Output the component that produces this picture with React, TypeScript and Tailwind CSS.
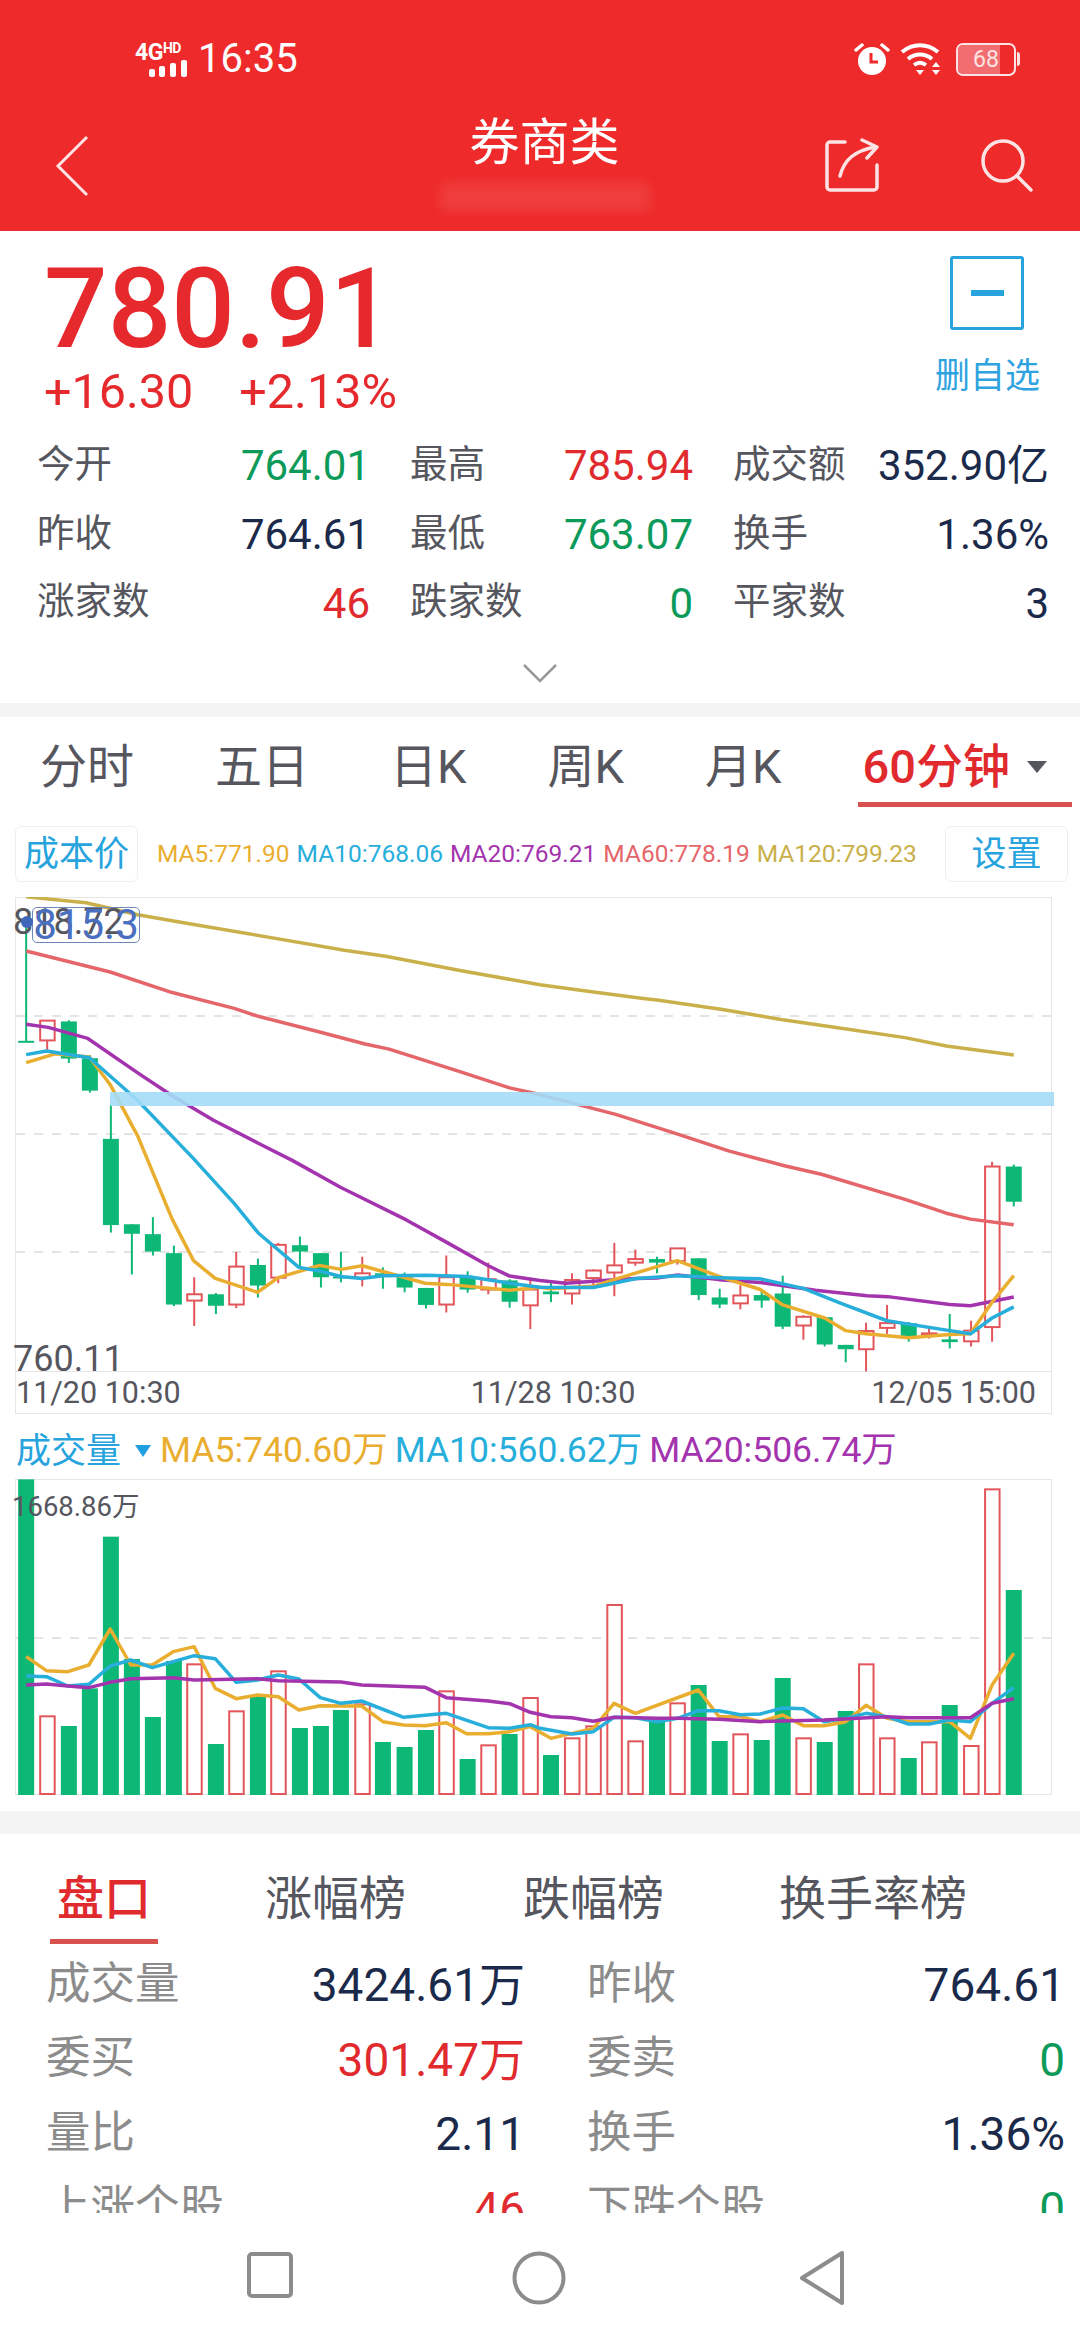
import React from 'react';

type Candle = [number, number, number, number, number];
type Pt = [number, number];

const RED = '#e2565b';
const GREEN = '#0db876';

// x centres of the bars, read off the picture (crop units, 2.904 per px)
const XS = [
  76, 137, 200, 261, 322, 383, 444, 505, 564, 627, 686, 749, 808, 871, 932, 990, 1052, 1112, 1175, 1237, 1296, 1358,
  1418, 1480, 1540, 1600, 1661, 1723, 1784, 1845, 1908, 1967, 2029, 2090, 2150, 2212, 2273, 2333, 2395, 2456, 2515,
  2576, 2639, 2698, 2758, 2820, 2881, 2944,
];

// bodyTop, bodyBottom, wickTop, wickBottom, 1 = rising
const CANDLES: Candle[] = [
  [609, 612, 320, 612, 0], [558, 608, 558, 632, 1], [560, 654, 557, 665, 0], [653, 735, 645, 740, 0],
  [857, 1075, 770, 1094, 0], [1073, 1097, 1073, 1200, 0], [1098, 1142, 1055, 1152, 0], [1146, 1276, 1127, 1280, 0],
  [1250, 1266, 1207, 1330, 1], [1250, 1279, 1247, 1300, 0], [1180, 1276, 1143, 1285, 1], [1176, 1228, 1160, 1258, 0],
  [1125, 1208, 1120, 1222, 1], [1126, 1142, 1104, 1180, 0], [1146, 1207, 1146, 1233, 0], [1205, 1208, 1143, 1220, 0],
  [1197, 1208, 1155, 1230, 1], [1197, 1205, 1182, 1236, 0], [1203, 1233, 1195, 1245, 0], [1234, 1277, 1234, 1286, 0],
  [1207, 1276, 1152, 1296, 1], [1207, 1238, 1192, 1246, 0], [1212, 1238, 1170, 1250, 1], [1215, 1269, 1212, 1284, 0],
  [1238, 1278, 1213, 1338, 1], [1243, 1250, 1222, 1270, 0], [1214, 1248, 1197, 1276, 1], [1190, 1209, 1187, 1228, 1],
  [1177, 1195, 1120, 1255, 1], [1161, 1170, 1137, 1178, 1], [1161, 1170, 1155, 1197, 0], [1134, 1166, 1134, 1175, 1],
  [1159, 1252, 1159, 1265, 0], [1258, 1276, 1236, 1285, 0], [1253, 1273, 1227, 1288, 1], [1252, 1266, 1240, 1284, 0],
  [1248, 1332, 1203, 1338, 0], [1307, 1329, 1303, 1365, 1], [1308, 1377, 1308, 1382, 0], [1378, 1389, 1378, 1422, 0],
  [1343, 1389, 1322, 1445, 1], [1323, 1335, 1277, 1350, 1], [1323, 1356, 1320, 1370, 0], [1349, 1354, 1336, 1362, 1],
  [1364, 1371, 1300, 1387, 0], [1342, 1369, 1317, 1382, 1], [927, 1333, 915, 1370, 1], [927, 1016, 922, 1028, 0],
];

const PRICE_LINES: { color: string; pts: Pt[] }[] = [
  {
    color: '#c9b04a',
    pts: [[76, 245], [250, 260], [400, 290], [550, 313], [800, 350], [1000, 380], [1120, 395], [1340, 432], [1568, 467], [1718, 485], [1868, 502], [1908, 506], [2098, 530], [2268, 555], [2418, 574], [2628, 601], [2748, 622], [2944, 645]],
  },
  {
    color: '#e5666a',
    pts: [[76, 382], [320, 435], [500, 487], [680, 527], [750, 547], [920, 585], [1060, 617], [1130, 630], [1340, 688], [1480, 728], [1568, 745], [1668, 768], [1788, 795], [1968, 845], [2118, 888], [2278, 925], [2388, 947], [2628, 1010], [2748, 1045], [2818, 1060], [2944, 1074]],
  },
  {
    color: '#a334ae',
    pts: [[76, 567], [140, 575], [255, 603], [400, 690], [500, 748], [620, 810], [750, 868], [850, 912], [990, 980], [1180, 1062], [1300, 1120], [1418, 1178], [1480, 1204], [1568, 1215], [1643, 1222], [1783, 1213], [1848, 1210], [1908, 1209], [1968, 1201], [2088, 1213], [2208, 1220], [2368, 1240], [2518, 1254], [2578, 1256], [2758, 1276], [2818, 1279], [2944, 1257]],
  },
  {
    color: '#e9ae30',
    pts: [[76, 664], [160, 642], [260, 650], [320, 720], [400, 850], [500, 1060], [562, 1165], [625, 1210], [748, 1245], [808, 1208], [928, 1177], [990, 1187], [1052, 1178], [1130, 1197], [1235, 1222], [1300, 1225], [1480, 1240], [1568, 1232], [1598, 1236], [1723, 1230], [1783, 1213], [1908, 1180], [1967, 1165], [2088, 1205], [2208, 1238], [2273, 1277], [2395, 1310], [2456, 1342], [2515, 1350], [2639, 1360], [2758, 1352], [2818, 1350], [2881, 1270], [2944, 1203]],
  },
  {
    color: '#27aedb',
    pts: [[76, 644], [135, 635], [260, 652], [400, 760], [560, 905], [680, 1020], [750, 1095], [868, 1182], [932, 1192], [990, 1205], [1050, 1210], [1112, 1203], [1240, 1202], [1358, 1205], [1480, 1222], [1568, 1232], [1723, 1233], [1848, 1210], [1968, 1203], [2088, 1208], [2208, 1211], [2333, 1235], [2448, 1275], [2576, 1317], [2758, 1342], [2818, 1350], [2881, 1310], [2944, 1282]],
  },
];

const VOLUMES = [
  178, 889, 918, 805, 350, 717, 891, 723, 733, 972, 874, 830, 754, 924, 918, 870, 853, 966, 981, 930, 814, 1017, 976,
  942, 834, 1005, 955, 919, 555, 964, 905, 850, 795, 963, 943, 960, 774, 955, 966, 873, 733, 955, 1014, 967, 855, 978,
  208, 510,
];

const VOLUME_LINES: { color: string; pts: Pt[] }[] = [
  {
    color: '#e9ae30',
    pts: [[76, 710], [135, 752], [197, 755], [258, 735], [320, 627], [380, 735], [442, 735], [503, 695], [564, 680], [625, 805], [686, 836], [748, 825], [808, 830], [868, 870], [930, 857], [1050, 858], [1112, 905], [1172, 915], [1235, 917], [1296, 908], [1355, 941], [1418, 941], [1480, 935], [1540, 920], [1600, 955], [1661, 940], [1723, 925], [1783, 850], [1845, 880], [2028, 810], [2088, 890], [2150, 890], [2208, 905], [2273, 885], [2333, 917], [2393, 917], [2456, 905], [2515, 856], [2576, 895], [2638, 905], [2758, 905], [2818, 955], [2881, 795], [2944, 700]],
  },
  {
    color: '#27aedb',
    pts: [[76, 768], [135, 770], [197, 798], [258, 793], [320, 738], [380, 720], [442, 743], [503, 725], [564, 707], [625, 716], [686, 787], [748, 780], [808, 765], [868, 777], [930, 833], [990, 850], [1050, 843], [1172, 892], [1296, 880], [1418, 923], [1480, 925], [1540, 914], [1568, 925], [1661, 942], [1723, 935], [1783, 892], [1845, 893], [1908, 905], [1968, 895], [2028, 872], [2088, 872], [2150, 884], [2208, 882], [2273, 864], [2333, 866], [2393, 905], [2456, 895], [2515, 880], [2576, 890], [2638, 912], [2698, 912], [2758, 900], [2818, 905], [2881, 850], [2944, 803]],
  },
  {
    color: '#a334ae',
    pts: [[76, 795], [135, 792], [197, 798], [258, 803], [320, 787], [380, 776], [503, 773], [564, 780], [748, 776], [808, 782], [990, 786], [1050, 795], [1235, 802], [1296, 833], [1418, 843], [1480, 851], [1540, 877], [1600, 890], [1661, 893], [1723, 904], [1783, 892], [1908, 895], [1968, 895], [2088, 898], [2208, 905], [2393, 900], [2576, 890], [2638, 893], [2818, 893], [2881, 850], [2944, 836]],
  },
];

const PX = (x: number) => x / 2.904;
const PRICE_Y = (y: number) => 800 + y / 2.529 - 897;
const VOL_Y = (y: number) => 1420 + y / 3 - 1479;

function isUp(i: number) {
  return CANDLES[i][4] === 1;
}

function PriceChart() {
  const dashes = [1016, 1134, 1252];
  return (
    <svg className="absolute inset-0 h-full w-full" viewBox="0 0 1080 517">
      {dashes.map((y) => (
        <line key={y} x1="16" x2="1051" y1={y - 897} y2={y - 897} stroke="#dcdcdc" strokeWidth="1.5" strokeDasharray="9 9" />
      ))}
      {CANDLES.map(([top, bottom, wickTop, wickBottom, up], i) => {
        const x = PX(XS[i]);
        const color = up ? RED : GREEN;
        return (
          <g key={i}>
            <line x1={x} x2={x} y1={PRICE_Y(wickTop)} y2={PRICE_Y(up ? top : wickBottom)} stroke={color} strokeWidth="2" />
            {up ? (
              <>
                <line x1={x} x2={x} y1={PRICE_Y(bottom)} y2={PRICE_Y(wickBottom)} stroke={color} strokeWidth="2" />
                <rect x={x - 7} y={PRICE_Y(top)} width="14.5" height={PRICE_Y(bottom) - PRICE_Y(top)} fill="#fff" stroke={color} strokeWidth="2" />
              </>
            ) : (
              <rect x={x - 8} y={PRICE_Y(top)} width="16" height={Math.max(PRICE_Y(bottom) - PRICE_Y(top), 2)} fill={color} />
            )}
          </g>
        );
      })}
      {PRICE_LINES.map((line) => (
        <polyline
          key={line.color}
          points={line.pts.map(([x, y]) => `${PX(x)},${PRICE_Y(y)}`).join(' ')}
          fill="none"
          stroke={line.color}
          strokeWidth="3.5"
          strokeLinejoin="round"
        />
      ))}
      {/* cost band sits over the lines, slightly see-through */}
      <rect x="110" y="195" width="944" height="14" fill="#a4dcf7" fillOpacity="0.9" />
    </svg>
  );
}

function VolumeChart() {
  return (
    <svg className="absolute inset-0 h-full w-full" viewBox="0 0 1080 316">
      <line x1="16" x2="1051" y1="159" y2="159" stroke="#dcdcdc" strokeWidth="1.5" strokeDasharray="9 9" />
      {VOLUMES.map((top, i) => {
        const x = PX(XS[i]);
        const y = VOL_Y(top);
        return isUp(i) ? (
          <rect key={i} x={x - 7} y={y} width="14.5" height={315 - y} fill="#fff" stroke={RED} strokeWidth="2" />
        ) : (
          <rect key={i} x={x - 8} y={y} width="16" height={316 - y} fill={GREEN} />
        );
      })}
      {VOLUME_LINES.map((line) => (
        <polyline
          key={line.color}
          points={line.pts.map(([x, y]) => `${PX(x)},${VOL_Y(y)}`).join(' ')}
          fill="none"
          stroke={line.color}
          strokeWidth="3.5"
          strokeLinejoin="round"
        />
      ))}
    </svg>
  );
}

function StatCell({ label, value, color }: { label: string; value: string; color: string }) {
  return (
    <div className="flex items-center justify-between">
      <span className="-mt-[3px] text-[37.5px] leading-none text-[#55565e]">{label}</span>
      <span className={`text-[42px] leading-none ${color}`}>{value}</span>
    </div>
  );
}

function InfoCell({ label, value, color }: { label: string; value: string; color: string }) {
  return (
    <div className="flex h-[74.5px] shrink-0 items-center justify-between">
      <span className="-mt-[3px] text-[44.5px] leading-none text-[#8c8c8c]">{label}</span>
      <span className={`text-[46px] leading-none ${color}`}>{value}</span>
    </div>
  );
}

const NAVY = 'text-[#1b2a4a]';
const UP = 'text-[#e02a2d]';
const DOWN = 'text-[#0b9a5a]';

export default function App() {
  return (
    <div
      className="flex h-[2340px] w-[1080px] flex-col overflow-hidden bg-white"
      style={{ fontFamily: 'Roboto, "Noto Sans CJK SC", sans-serif' }}
    >
      {/* red header */}
      <header className="flex h-[231px] shrink-0 flex-col bg-[#ee2a2a] text-white">
        <div className="flex h-[108px] items-center justify-between pl-[135px] pr-[60px] pt-[10px]">
          <div className="flex items-center gap-[9px]">
            <div className="flex w-[54px] flex-col items-end">
              <div className="flex items-start self-start font-bold leading-none tracking-[-0.5px]">
                <span className="text-[23px]">4G</span>
                <span className="text-[14px]">HD</span>
              </div>
              <svg className="-mt-[4px]" width="40" height="17" viewBox="0 0 40 17" fill="#fff">
                <rect x="0" y="9" width="6" height="8" rx="2" />
                <rect x="10" y="6" width="6" height="11" rx="2" />
                <rect x="21" y="3" width="6" height="14" rx="2" />
                <rect x="32" y="0" width="6" height="17" rx="2" />
              </svg>
            </div>
            <span className="text-[40px] leading-none">16:35</span>
          </div>
          <div className="flex items-center gap-[10px]">
            <svg width="36" height="36" viewBox="0 0 36 36">
              <circle cx="18" cy="20" r="14" fill="#fff" />
              <path d="M17 12v9h7" fill="none" stroke="#ee2a2a" strokeWidth="3" />
              <path d="M2 9l6-5M34 9l-6-5" stroke="#fff" strokeWidth="3.5" strokeLinecap="round" />
            </svg>
            <svg width="44" height="36" viewBox="0 0 44 36" fill="none" stroke="#fff">
              <path d="M2 11c11-9 25-9 36 0" strokeWidth="4" />
              <path d="M8 18c7-6 17-6 24 0" strokeWidth="4" />
              <path d="M14 24c4-3 8-3 12 0" strokeWidth="4" />
              <path d="M16 29h8l-4 5z" fill="#fff" stroke="none" />
              <path d="M36 21l4 5h-8zM36 34l4-5h-8z" fill="#fff" stroke="none" />
            </svg>
            <div className="relative ml-[2px] flex h-[33px] w-[60px] items-center overflow-hidden rounded-[7px] border-[2.5px] border-[#fde3e3]">
              <div className="h-full w-[42px] bg-[#f26d6f]" />
              <span className="absolute inset-0 flex items-center justify-center text-[23px] leading-none text-[#fde3e3]">68</span>
            </div>
            <div className="-ml-[9px] h-[14px] w-[3px] rounded-r bg-[#fde3e3]" />
          </div>
        </div>
        <div className="flex flex-1 items-start px-[46px]">
          <div className="flex-1 pl-[9px]">
            <svg className="mt-[27px]" width="36" height="62" viewBox="0 0 36 62" fill="none" stroke="#fde3e3" strokeWidth="3">
              <path d="M32 2L3 31l29 29" />
            </svg>
          </div>
          <div className="flex flex-col items-center pt-[9px]">
            <span className="text-[50px] leading-[52px]">券商类</span>
            <div className="mt-[14px] h-[28px] w-[210px] rounded bg-[#f25a5a] opacity-40 blur-[6px]" />
          </div>
          <div className="flex flex-1 justify-end">
            <div className="mt-[30px] flex items-center gap-[99px]">
              <svg width="56" height="54" viewBox="0 0 56 54" fill="none" stroke="#fde3e3" strokeWidth="3.5" strokeLinecap="round" strokeLinejoin="round">
                <path d="M20 4H5a3 3 0 0 0-3 3v42a3 3 0 0 0 3 3h44a3 3 0 0 0 3-3V27" />
                <path d="M15 38C19 22 29 13 50 9" />
                <path d="M37 2l15 7-10 11" />
              </svg>
              <svg width="54" height="54" viewBox="0 0 54 54" fill="none" stroke="#fde3e3" strokeWidth="3.5" strokeLinecap="round">
                <circle cx="23" cy="23" r="20" />
                <path d="M37 38l14 14" />
              </svg>
            </div>
          </div>
        </div>
      </header>

      {/* quote */}
      <section className="flex h-[201px] shrink-0 justify-between pl-[44px] pr-[40px]">
        <div className="flex flex-col pt-[22px]">
          <span className="text-[112px] font-medium leading-[112px] text-[#e5292c]">780.91</span>
          <div className="mt-[2px] flex gap-[46px] text-[48.5px] leading-[50px] text-[#e5292c]">
            <span>+16.30</span>
            <span>+2.13%</span>
          </div>
        </div>
        <div className="flex flex-col items-center pt-[25px]">
          <div className="flex h-[74px] w-[74px] items-center justify-center rounded-[3px] border-[3px] border-[#27a3dd]">
            <div className="h-[6px] w-[33px] bg-[#27a3dd]" />
          </div>
          <span className="mt-[27px] text-[35px] leading-[40px] text-[#2ea3e0]">删自选</span>
        </div>
      </section>

      <div className="grid h-[206px] shrink-0 grid-cols-[333px_283px_316px] grid-rows-3 items-center gap-x-[40px] pl-[37px]">
        <StatCell label="今开" value="764.01" color={DOWN} />
        <StatCell label="最高" value="785.94" color={UP} />
        <StatCell label="成交额" value="352.90亿" color={NAVY} />
        <StatCell label="昨收" value="764.61" color={NAVY} />
        <StatCell label="最低" value="763.07" color={DOWN} />
        <StatCell label="换手" value="1.36%" color={NAVY} />
        <StatCell label="涨家数" value="46" color={UP} />
        <StatCell label="跌家数" value="0" color={DOWN} />
        <StatCell label="平家数" value="3" color={NAVY} />
      </div>

      <div className="flex h-[65px] shrink-0 items-start justify-center pt-[25px]">
        <svg width="34" height="20" viewBox="0 0 34 20" fill="none" stroke="#9a9a9a" strokeWidth="2.5">
          <path d="M1 2l16 16L33 2" />
        </svg>
      </div>

      <div className="h-[14px] shrink-0 bg-[#f4f4f4]" />

      {/* period tabs */}
      <nav className="flex h-[85px] shrink-0 items-center gap-[81px] pl-[40px] pt-[14px] text-[47px] leading-none text-[#55565e]">
        <span>分时</span>
        <span>五日</span>
        <span>日K</span>
        <span>周K</span>
        <span>月K</span>
        <div className="flex items-center gap-[16px]">
          <span className="font-medium text-[#e02a2d]">60分钟</span>
          <svg width="22" height="14" viewBox="0 0 22 14" fill="#55565e">
            <path d="M1 1h20L11 13z" />
          </svg>
        </div>
      </nav>
      <div className="flex h-[5px] shrink-0 justify-end pr-[8px]">
        <div className="w-[214px] bg-[#d9514f]" />
      </div>

      {/* settings row */}
      <div className="flex h-[90px] shrink-0 items-end pb-[15px] pl-[15px] pr-[12px]">
        <div className="flex h-[56px] w-[123px] items-center justify-center rounded-[6px] border border-[#efefef] text-[35px] leading-none text-[#27a3dd]">
          成本价
        </div>
        <div className="ml-[19px] flex h-[56px] flex-1 items-center gap-[7px] text-[24.5px] leading-none">
          <span className="text-[#e9ae30]">MA5:771.90</span>
          <span className="text-[#27aedb]">MA10:768.06</span>
          <span className="text-[#a334ae]">MA20:769.21</span>
          <span className="text-[#e5666a]">MA60:778.19</span>
          <span className="text-[#c9b04a]">MA120:799.23</span>
        </div>
        <div className="flex h-[56px] w-[123px] items-center justify-center rounded-[6px] border border-[#efefef] text-[35px] leading-none text-[#27a3dd]">
          设置
        </div>
      </div>

      {/* price chart */}
      <div className="relative h-[517px] w-[1080px] shrink-0">
        <div className="ml-[15px] flex h-full w-[1037px] flex-col border border-[#e6e6e6]">
          <div className="h-[474px] border-b border-[#e6e6e6]" />
          <div className="flex flex-1 items-center pt-[2px] text-[30.5px] leading-none text-[#55565e]">
            <span>11/20 10:30</span>
            <span className="ml-[290px]">11/28 10:30</span>
            <span className="ml-[236px]">12/05 15:00</span>
          </div>
        </div>
        <PriceChart />
        <span className="absolute left-[13px] top-[5px] text-[36px] leading-[40px] text-[#55565e]">818.72</span>
        <div className="absolute left-[32px] top-[10px] flex h-[36px] w-[108px] items-center justify-center rounded-[5px] border border-[#6f87b8] text-[42px] leading-none text-[#4a6fbf]">
          815.3
        </div>
        <div className="absolute left-[21px] top-[19px] h-[12px] w-[12px] rounded-full bg-[#3f66b8]" />
        <span className="absolute left-[13px] top-[447px] text-[36px] leading-[30px] text-[#55565e]">760.11</span>
      </div>

      {/* volume */}
      <div className="flex h-[65px] shrink-0 items-center pl-[16px] pt-[9px] text-[35.5px] leading-none">
        <span className="text-[35px] text-[#27a3dd]">成交量</span>
        <svg className="ml-[14px]" width="16" height="12" viewBox="0 0 16 12" fill="#1f9fe0">
          <path d="M0 0h16L8 12z" />
        </svg>
        <span className="ml-[9px] text-[#e9ae30]">MA5:740.60万</span>
        <span className="ml-[7px] text-[#27aedb]">MA10:560.62万</span>
        <span className="ml-[7px] text-[#a334ae]">MA20:506.74万</span>
      </div>
      <div className="relative h-[316px] w-[1080px] shrink-0">
        <div className="ml-[15px] h-full w-[1037px] border border-[#e6e6e6]" />
        <VolumeChart />
        <span className="absolute left-[12px] top-[13px] text-[27.5px] leading-[30px] text-[#55565e]">1668.86万</span>
      </div>

      <div className="h-[16px] shrink-0" />
      <div className="h-[23px] shrink-0 bg-[#f4f4f4]" />

      {/* 盘口 block */}
      <div className="flex h-[379px] shrink-0 flex-col overflow-hidden">
        <div className="flex h-[110px] shrink-0 items-end pl-[50px] text-[47px] leading-none text-[#55565e]">
          <div className="flex w-[108px] flex-col items-center">
            <span className="pb-[17px] font-medium text-[#e02a2d]">盘口</span>
            <div className="h-[5px] w-[108px] bg-[#d9514f]" />
          </div>
          <span className="ml-[107px] pb-[22px]">涨幅榜</span>
          <span className="ml-[117px] pb-[22px]">跌幅榜</span>
          <span className="ml-[115px] pb-[22px]">换手率榜</span>
        </div>
        <div className="grid grid-cols-[479px_478px] gap-x-[62px] pl-[46px] pt-[4px]">
          <InfoCell label="成交量" value="3424.61万" color={NAVY} />
          <InfoCell label="昨收" value="764.61" color={NAVY} />
          <InfoCell label="委买" value="301.47万" color={UP} />
          <InfoCell label="委卖" value="0" color={DOWN} />
          <InfoCell label="量比" value="2.11" color={NAVY} />
          <InfoCell label="换手" value="1.36%" color={NAVY} />
          <InfoCell label="上涨个股" value="46" color={UP} />
          <InfoCell label="下跌个股" value="0" color={DOWN} />
        </div>
      </div>

      {/* android nav bar */}
      <div className="flex flex-1 items-start bg-white pl-[247px] pt-[38px]">
        <svg width="46" height="48" viewBox="0 0 46 48" fill="none" stroke="#8c8c8c" strokeWidth="4">
          <rect x="2" y="3" width="42" height="42" rx="3" />
        </svg>
        <svg className="ml-[219px]" width="54" height="54" viewBox="0 0 54 54" fill="none" stroke="#8c8c8c" strokeWidth="4">
          <circle cx="27" cy="27" r="24.5" />
        </svg>
        <svg className="ml-[233px]" width="46" height="54" viewBox="0 0 46 54" fill="none" stroke="#8c8c8c" strokeWidth="4" strokeLinejoin="round">
          <path d="M43 2v50L3 27z" />
        </svg>
      </div>
    </div>
  );
}
